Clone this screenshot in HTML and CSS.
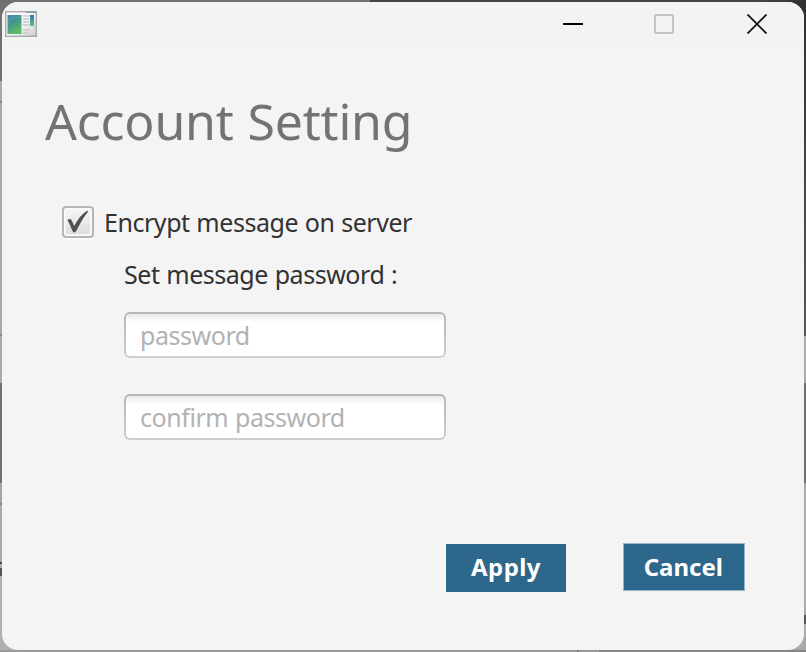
FILE: index.html
```html
<!DOCTYPE html>
<html lang="en">
<head>
<meta charset="utf-8">
<title>Account Setting</title>
<link rel="stylesheet" href="styles.css">
</head>
<body>
<main class="window">
  <header class="titlebar">
    <svg class="app-icon" width="32" height="26" viewBox="0 0 32 26">
      <defs>
        <linearGradient id="pane" x1="0" y1="0" x2="0.4" y2="1"><stop offset="0" stop-color="#2f78a6"/><stop offset=".5" stop-color="#3f9a88"/><stop offset="1" stop-color="#62b865"/></linearGradient>
        <linearGradient id="bar" x1="0" y1="0" x2="0" y2="1"><stop offset="0" stop-color="#2f76b0"/><stop offset="1" stop-color="#60c080"/></linearGradient>
        <linearGradient id="frame" x1="0" y1="0" x2="1" y2="1"><stop offset="0" stop-color="#fff"/><stop offset=".6" stop-color="#f2f2f2"/><stop offset="1" stop-color="#c8c8c8"/></linearGradient>
      </defs>
      <rect x=".7" y=".7" width="30.6" height="24.6" fill="url(#frame)" stroke="#a6abae" stroke-width="1.4"/>
      <path d="M21 1.2h10" stroke="#8d9da7" stroke-width="1.4"/>
      <rect x="2.5" y="4" width="14" height="19" fill="url(#pane)"/>
      <path d="M2.5 14Q6 7.5 16.5 7V4h-14z" fill="#fff" opacity=".1"/>
      <path d="M18 5h6M18 8h6M18 11h6M18 14h6M18 19h6M18 22h6" stroke="#c9c9c9" stroke-width="1.6"/>
      <rect x="25" y="4" width="4" height="11" fill="url(#bar)"/>
    </svg>
    <div class="controls">
      <svg width="20" height="20" viewBox="0 0 20 20"><path d="M0 10h20" stroke="#000" stroke-width="2"/></svg>
      <svg width="20" height="20" viewBox="0 0 20 20"><rect x="1" y="1" width="18" height="18" rx="1.5" fill="none" stroke="#c3c3c3" stroke-width="2"/></svg>
      <svg width="20" height="20" viewBox="0 0 20 20"><path d="M.5.5l19 19M19.5.5l-19 19" stroke="#111" stroke-width="1.8"/></svg>
    </div>
  </header>
  <h1 class="heading">Account Setting</h1>
  <form class="settings">
    <div class="option">
      <span class="checkbox">
        <svg width="22" height="24" viewBox="0 0 22 24"><path d="M.5 10.500C1.800 8.700 3.800 8.700 4.600 10.300L7.300 16C10.500 9.500 15 4 20.300 .6L21 1.800C16.500 7 13 14 9.500 20.500C8 23 6.500 23 5.300 20.500C3.800 17 2.500 13.500 .5 10.500Z" fill="#505050"/></svg>
      </span>
      <span class="label option-label">Encrypt message on server</span>
    </div>
    <div class="fields">
      <span class="label prompt">Set message password :</span>
      <input class="field" type="password" placeholder="password">
      <input class="field confirm" type="password" placeholder="confirm password">
    </div>
  </form>
  <footer class="actions">
    <button class="button apply">Apply</button>
    <button class="button cancel">Cancel</button>
  </footer>
</main>
</body>
</html>
```
FILE: styles.css
```css
* { box-sizing: border-box; }

body {
  margin: 0;
  width: 806px;
  height: 652px;
  padding: 2px;
  overflow: hidden;
  font-family: "Noto Sans", "Open Sans", sans-serif;
  background:
    linear-gradient(90deg, #707070 0 370px, #444 370px 760px, #303030) top / 100% 2px no-repeat,
    linear-gradient(90deg, #999 0 577px, #777 577px 579px, #999 579px 599px, #858585 599px) bottom / 100% 2px no-repeat,
    linear-gradient(#707070 0 81px, #aaa 81px 101px, #888 101px 103px, #aaa 103px 334px, #888 334px 336px, #aaa 336px 383px, #707070 383px 483px, #a5a5a5 483px 503px, #888 503px 505px, #aaa 505px 562px, #444 562px 564px, #aaa 564px 568px, #555 568px 576px, #b0b0b0 576px) left / 20px 100% no-repeat,
    linear-gradient(#303030 0, #555 336px, #aaa 336px 383px, #707070 383px 483px, #aaa 483px 615px, #555 615px 624px, #aaa 624px) right / 20px 100% no-repeat;
}

.window {
  width: 802px;
  height: 648px;
  border-radius: 16px;
  background: #f4f4f4;
  display: flex;
  flex-direction: column;
  overflow: hidden;
}

.titlebar {
  height: 46px;
  flex: none;
  display: flex;
  justify-content: space-between;
  background: #f3f3f3;
}

.app-icon { margin: 9px 0 0 3px; }

.controls {
  display: flex;
  gap: 72px;
  padding: 12px 37px 0 0;
}

.controls svg { display: block; }
.controls svg:first-child { margin-right: -1px; }
.controls svg:last-child { margin-left: 1px; }

.heading {
  margin: 39px 0 0 43px;
  height: 68px;
  line-height: 68px;
  font-size: 50px;
  font-weight: 400;
  letter-spacing: -0.2px;
  word-spacing: 1px;
  color: #737373;
  white-space: nowrap;
}

.settings { margin: 50px 0 0 60px; }

.option {
  display: flex;
  align-items: center;
  height: 34px;
}

.checkbox {
  width: 32px;
  height: 32px;
  border: 2px solid #b5b5b5;
  border-radius: 4px;
  background: linear-gradient(#f7f7f7, #dcdcdc);
  box-shadow: inset 0 0 0 2px #f8f8f8, 0 2px 0 #fafafa;
  display: flex;
  justify-content: center;
  padding-top: 2px;
}

.checkbox svg { flex: none; }

.label {
  font-size: 25px;
  line-height: 32px;
  letter-spacing: -0.46px;
  word-spacing: 0.7px;
  color: #323232;
  white-space: nowrap;
}

.option-label { margin: -1px 0 0 10px; }

.fields {
  display: flex;
  flex-direction: column;
  align-items: flex-start;
  padding: 19px 0 0 62px;
}

.field {
  width: 322px;
  height: 46px;
  margin-top: 22px;
  padding: 0 14px 1px;
  border: 2px solid transparent;
  border-radius: 6px;
  outline: none;
  font: 25px "Noto Sans", "Open Sans", sans-serif;
  letter-spacing: -0.45px;
  word-spacing: 0.8px;
  background:
    linear-gradient(#eaeaea, #fff 8px) padding-box,
    linear-gradient(#b7b7b7, #cecece) border-box;
}

.confirm { margin-top: 36px; }

.field::placeholder { color: #b2b2b2; opacity: 1; }

.actions {
  display: flex;
  justify-content: flex-end;
  gap: 57px;
  margin-top: 103px;
  padding-right: 59.5px;
}

.button {
  width: 121.5px;
  height: 48px;
  padding: 0 1px 1px 0;
  border: 1px solid #9ab5c7;
  background: #2d688c;
  color: #fff;
  font: 700 24px "Noto Sans", "Open Sans", sans-serif;
}

.apply {
  width: 120px;
  padding: 0 0 4px;
  border: 0;
  margin-top: 1px;
  letter-spacing: 0.4px;
}
```
